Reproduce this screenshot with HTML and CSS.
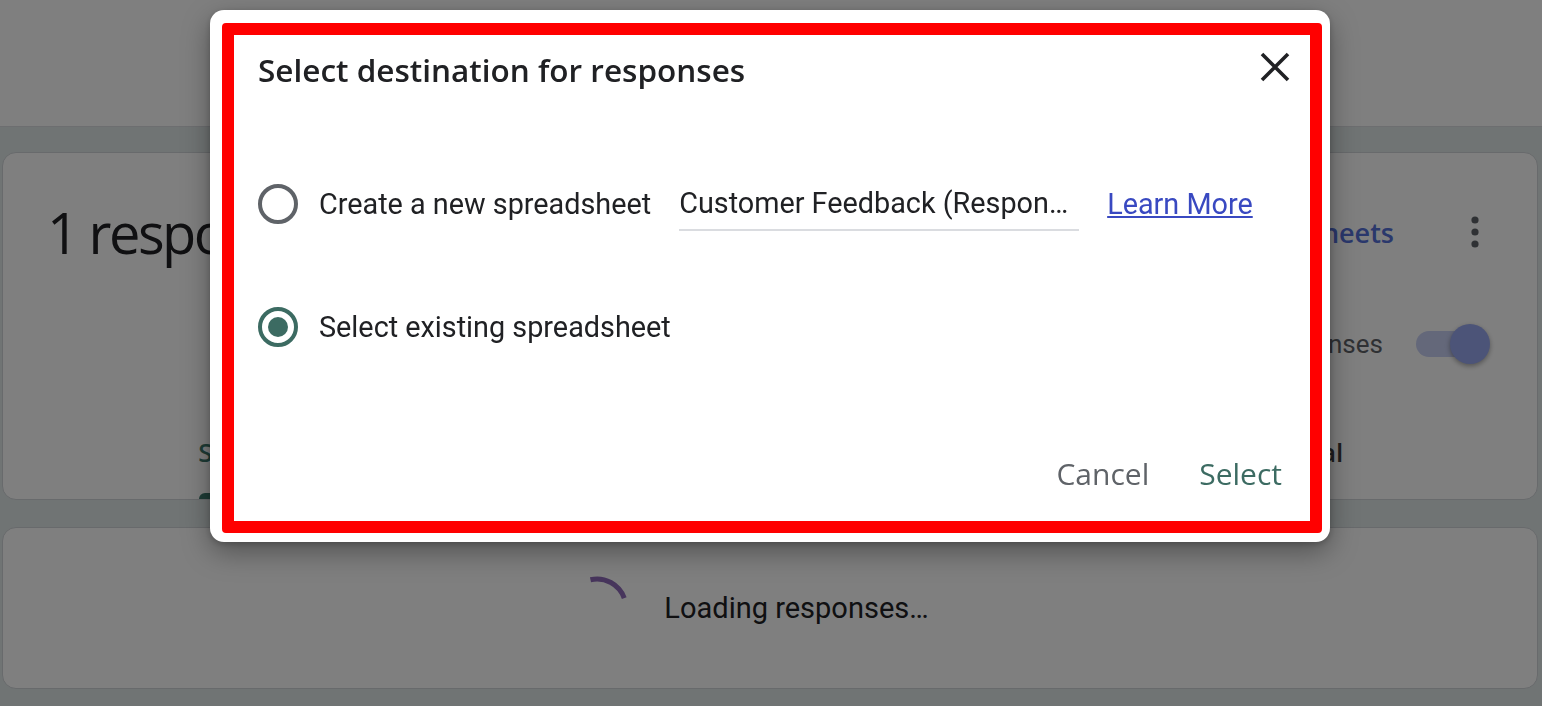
FILE: index.html
```html
<!DOCTYPE html>
<html lang="en">
<head>
    <meta charset="UTF-8">
    <meta name="viewport" content="width=device-width, initial-scale=1.0">
    <title>Responses</title>
    <link rel="stylesheet" href="styles.css">
</head>
<body>
    <div class="top-bar"></div>

    <div class="responses">
        <div class="card summary-card">
            <div class="summary-head">
                <h1 class="count">1 response</h1>
                <a class="sheets-link">Link to Sheets</a>
                <button class="kebab" aria-label="More">
                    <svg width="8" height="32" viewBox="0 0 8 32">
                        <circle cx="4" cy="4" r="3.6" fill="#5f6368"/>
                        <circle cx="4" cy="16" r="3.6" fill="#5f6368"/>
                        <circle cx="4" cy="28" r="3.6" fill="#5f6368"/>
                    </svg>
                </button>
            </div>
            <div class="accepting">
                <span class="accepting-label">Accepting responses</span>
                <span class="toggle"><span class="toggle-knob"></span></span>
            </div>
            <div class="tabs">
                <div class="tab active"><span class="tab-label">Summary</span><span class="tab-bar"></span></div>
                <div class="tab"><span class="tab-label">Question</span><span class="tab-bar"></span></div>
                <div class="tab"><span class="tab-label">Individual</span><span class="tab-bar"></span></div>
            </div>
        </div>

        <div class="card loading-card">
            <svg class="spinner" width="64" height="64" viewBox="0 0 64 64">
                <path d="M25.48 3.74 A29 29 0 0 1 59.25 22.08" fill="none" stroke="#8e6bb8" stroke-width="5"/>
            </svg>
            <span class="loading-text">Loading responses…</span>
        </div>
    </div>

    <div class="scrim"></div>

    <div class="dialog" role="dialog">
        <div class="frame">
            <div class="dialog-head">
                <h2 class="dialog-title">Select destination for responses</h2>
                <button class="close" aria-label="Close">
                    <svg width="30" height="30" viewBox="0 0 30 30">
                        <path d="M2 2 L28 28 M28 2 L2 28" stroke="#202124" stroke-width="3.6"/>
                    </svg>
                </button>
            </div>

            <div class="options">
                <div class="option">
                    <span class="radio"></span>
                    <span class="option-label">Create a new spreadsheet</span>
                    <span class="name-field">Customer Feedback (Respon…</span>
                    <a class="learn-more">Learn More</a>
                </div>
                <div class="option">
                    <span class="radio checked"></span>
                    <span class="option-label">Select existing spreadsheet</span>
                </div>
            </div>

            <div class="dialog-actions">
                <button class="text-btn cancel">Cancel</button>
                <button class="text-btn confirm">Select</button>
            </div>
        </div>
    </div>
</body>
</html>
```

FILE: styles.css
```css
* {
    box-sizing: border-box;
}

body {
    margin: 0;
    width: 1542px;
    height: 706px;
    overflow: hidden;
    background-color: #e0e8e8;
    font-family: Roboto, "Liberation Sans", sans-serif;
    color: #202124;
}

button {
    background: none;
    border: none;
    padding: 0;
    font: inherit;
    cursor: pointer;
}

.top-bar {
    height: 127px;
    background-color: #fff;
    border-bottom: 1px solid #dadce0;
}

.responses {
    display: flex;
    flex-direction: column;
    gap: 27px;
    padding: 25px 4px 0 2px;
}

.card {
    background-color: #fff;
    border: 1px solid #d0d4d8;
    border-radius: 14px;
}

/* summary card */
.summary-card {
    height: 348px;
    display: flex;
    flex-direction: column;
}

.summary-head {
    display: flex;
    align-items: center;
    height: 100px;
    margin-top: 29px;
    padding: 0 38px 0 44px;
}

.count {
    margin: 0;
    flex: 1;
    font-family: "Open Sans", sans-serif;
    font-weight: 400;
    font-size: 56px;
    letter-spacing: -2.5px;
}

.sheets-link {
    font-family: "Open Sans", sans-serif;
    font-weight: 600;
    font-size: 27px;
    color: #5470d8;
}

.kebab {
    width: 48px;
    height: 48px;
    margin-left: 57px;
    display: flex;
    align-items: center;
    justify-content: center;
}

.accepting {
    display: flex;
    justify-content: flex-end;
    align-items: center;
    gap: 33px;
    height: 60px;
    margin-top: 32px;
    padding-right: 55px;
}

.accepting-label {
    font-size: 26px;
    color: #5f6368;
}

.toggle {
    width: 66px;
    height: 26px;
    border-radius: 13px;
    background-color: #c8d0f4;
    display: flex;
    align-items: center;
    justify-content: flex-end;
}

.toggle-knob {
    width: 40px;
    height: 40px;
    border-radius: 50%;
    margin-right: -8px;
    background-color: #98a8f0;
    box-shadow: 0 2px 5px rgba(0, 0, 0, 0.35);
}

.tabs {
    margin-top: auto;
    display: grid;
    grid-template-columns: repeat(3, 1fr);
}

.tab {
    display: flex;
    flex-direction: column;
    align-items: center;
}

.tab-label {
    line-height: 56px;
    font-family: "Open Sans", sans-serif;
    font-weight: 600;
    font-size: 26px;
    color: #3c3c3c;
}

.tab-bar {
    width: 120px;
    height: 6px;
    margin-top: 13px;
    border-radius: 6px 6px 0 0;
}

.tab.active .tab-label {
    color: #3c786c;
}

.tab.active .tab-bar {
    background-color: #3c786c;
}

/* loading card */
.loading-card {
    height: 162px;
    display: flex;
    align-items: center;
    justify-content: center;
    gap: 35px;
    padding-right: 46px;
}

.loading-text {
    font-size: 29px;
}

.scrim {
    position: fixed;
    inset: 0;
    background-color: rgba(0, 0, 0, 0.5);
}

/* dialog */
.dialog {
    position: absolute;
    left: 210px;
    top: 10px;
    width: 1120px;
    height: 532px;
    padding: 13px 8px 9px 12px;
    background-color: #fff;
    border-radius: 14px;
    box-shadow: 0 10px 28px rgba(0, 0, 0, 0.35), 0 2px 6px rgba(0, 0, 0, 0.2);
}

.frame {
    height: 100%;
    border: 12px solid #ff0000;
    border-radius: 4px;
    display: flex;
    flex-direction: column;
}

.dialog-head {
    display: flex;
    justify-content: space-between;
    height: 70px;
    padding: 0 20px 0 24px;
}

.dialog-title {
    margin: 0;
    line-height: 70px;
    font-family: "Open Sans", sans-serif;
    font-weight: 600;
    font-size: 31.5px;
    color: #202124;
}

.close {
    width: 30px;
    height: 30px;
    margin-top: 17px;
}

.options {
    display: flex;
    flex-direction: column;
    gap: 63px;
    padding: 69px 0 0 24px;
}

.option {
    display: flex;
    align-items: center;
    height: 60px;
}

.radio {
    width: 40px;
    height: 40px;
    border-radius: 50%;
    border: 4px solid #5f6368;
    display: flex;
    align-items: center;
    justify-content: center;
}

.radio.checked {
    border-color: #3c6b62;
}

.radio.checked::after {
    content: "";
    width: 20px;
    height: 20px;
    border-radius: 50%;
    background-color: #3c6b62;
}

.option-label {
    margin-left: 21px;
    font-size: 28.8px;
}

.name-field {
    width: 400px;
    height: 54px;
    margin-left: 28px;
    line-height: 52px;
    border-bottom: 2px solid #dadce0;
    font-size: 28.8px;
    white-space: nowrap;
    overflow: hidden;
}

.learn-more {
    margin-left: 28px;
    font-size: 28.8px;
    color: #3949c1;
    text-decoration: underline;
}

.dialog-actions {
    margin-top: auto;
    margin-bottom: 18px;
    height: 60px;
    display: flex;
    justify-content: flex-end;
    align-items: center;
    gap: 50px;
    padding-right: 28px;
}

.text-btn {
    font-family: "Open Sans", sans-serif;
    font-weight: 500;
    font-size: 30px;
}

.cancel {
    color: #5f6368;
}

.confirm {
    color: #3c6b62;
}
```
